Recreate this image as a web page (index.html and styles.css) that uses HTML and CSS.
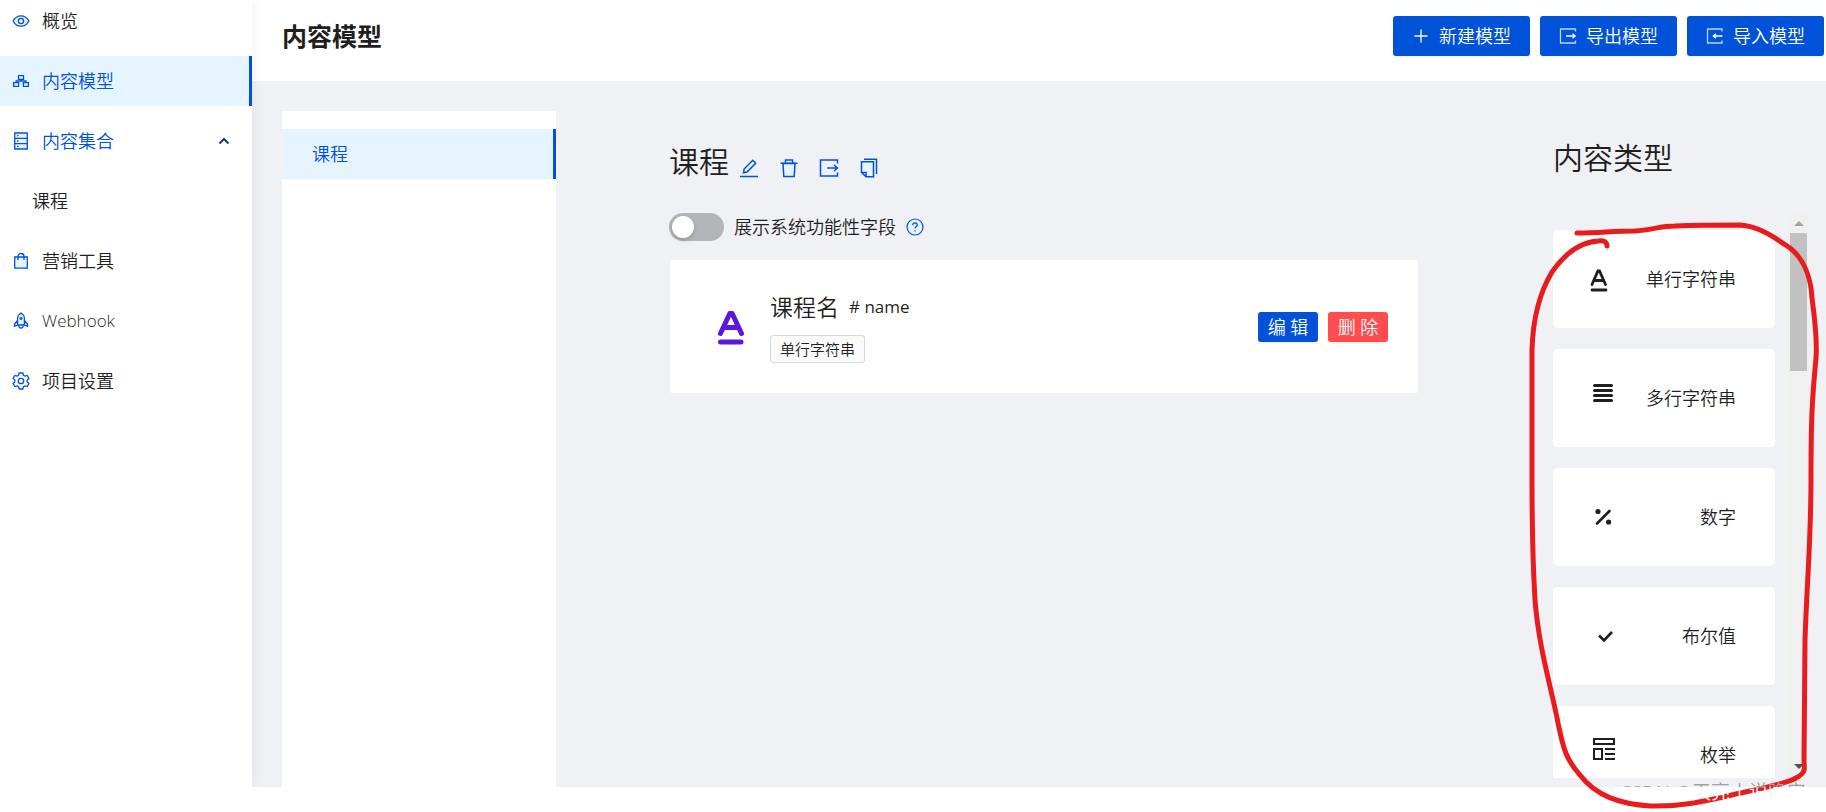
FILE: index.html
```html
<!DOCTYPE html>
<html lang="zh-CN">
<head>
<meta charset="utf-8">
<meta name="viewport" content="width=device-width, initial-scale=1">
<title>内容模型</title>
<link rel="stylesheet" href="styles.css">
</head>
<body>
<div class="app">
  <aside class="sidebar">
    <nav class="menu">
      <a class="menu-item" href="#overview">
        <svg class="icon" viewBox="0 0 18 18"><path fill="#e6f4ff" d="M1 9C3 5.500 5.700 3.800 9 3.800S15 5.500 17 9c-2 3.500-4.700 5.200-8 5.200S3 12.500 1 9z"/><circle cx="9" cy="9" r="2.600"/></svg>
        <span>概览</span>
      </a>
      <a class="menu-item active" href="#models">
        <svg class="icon" viewBox="0 0 18 18"><path d="M6.500 3.600h5v3.800h-5zM1.600 10.700h5v3.600h-5zM11.400 10.700h5v3.600h-5zM9 7.400v1.600M4.100 10.700V9h9.800v1.700"/></svg>
        <span>内容模型</span>
      </a>
      <a class="menu-item open" href="#collections">
        <svg class="icon" viewBox="0 0 18 18"><path fill="#e6f4ff" d="M2.700 1h12.600v16H2.700zM2.700 6.300h12.600M2.700 11.700h12.600"/><path d="M5 3.700h1.500M5 9h1.500M5 14.300h1.500"/></svg>
        <span>内容集合</span>
        <svg class="chevron" viewBox="0 0 12 8"><path d="M1.500 6.500L6 2l4.500 4.500"/></svg>
      </a>
      <a class="menu-item sub" href="#course">课程</a>
      <a class="menu-item" href="#marketing">
        <svg class="icon" viewBox="0 0 18 18"><path fill="#e6f4ff" d="M2.700 5h12.600v11.200H2.700z"/><path d="M6 8V4.500a3 3 0 0 1 6 0V8"/></svg>
        <span>营销工具</span>
      </a>
      <a class="menu-item" href="#webhook">
        <svg class="icon" viewBox="0 0 18 18"><path fill="#e6f4ff" d="M5.600 13V6.500C5.600 4 7 2.200 9 1c2 1.200 3.400 3 3.400 5.500V13zM5.600 8.500L2.500 12v2.200l3.100-1.200M12.400 8.500l3.100 3.500v2.200L12.400 13"/><circle cx="9" cy="6.500" r=".8"/><path d="M6.800 13.500c.1 1.600.9 2.700 2.200 2.700s2.100-1.100 2.200-2.700"/></svg>
        <span class="latin">Webhook</span>
      </a>
      <a class="menu-item" href="#settings">
        <svg class="icon" viewBox="0 0 18 18"><path d="M7.200 1h3.600l.6 2.300 1.400.8 2.300-.7 1.800 3-1.700 1.700v1.800l1.700 1.700-1.800 3-2.300-.7-1.400.8-.6 2.300H7.200l-.6-2.300-1.400-.8-2.300.7-1.800-3 1.700-1.700V8.100L1.100 6.400l1.800-3 2.300.7 1.400-.8z"/><circle cx="9" cy="9" r="2.700"/></svg>
        <span>项目设置</span>
      </a>
    </nav>
  </aside>

  <div class="page">
    <header class="header">
      <h1 class="title">内容模型</h1>
      <div class="actions">
        <button class="btn" type="button">
          <svg class="btn-icon" viewBox="0 0 18 18"><path d="M9 2.500v13M2.500 9h13"/></svg>
          <span>新建模型</span>
        </button>
        <button class="btn" type="button">
          <svg class="btn-icon" viewBox="0 0 18 18"><path opacity=".75" d="M16.500 4.500V2H1.500v14h15v-2.500"/><path d="M7 9h9M13.500 6.800L16.200 9l-2.700 2.200"/></svg>
          <span>导出模型</span>
        </button>
        <button class="btn" type="button">
          <svg class="btn-icon" viewBox="0 0 18 18"><path opacity=".75" d="M16 4.500V2H1.500v14H16v-2.500"/><path d="M16.500 9h-9M10 6.800L7.300 9l2.700 2.200"/></svg>
          <span>导入模型</span>
        </button>
      </div>
    </header>

    <div class="content">
      <nav class="models">
        <a class="model active" href="#course-model">课程</a>
      </nav>

      <main class="schema">
        <div class="schema-head">
          <h2 class="heading">课程</h2>
          <div class="tools">
            <button class="tool" type="button" aria-label="编辑模型"><svg viewBox="0 0 20 20"><path d="M1 18.500h18"/><path fill="#e6f4ff" d="M4.500 14.800l.6-3.800 8.600-8.800 3 3-8.700 8.800z"/></svg></button>
            <button class="tool" type="button" aria-label="删除模型"><svg viewBox="0 0 20 20"><path fill="#e6f4ff" d="M4 5.500h12l-.8 13H4.800z"/><path d="M1.500 5.300h17M6.500 5V2h7v3"/></svg></button>
            <button class="tool" type="button" aria-label="导出模型"><svg viewBox="0 0 20 20"><path d="M18.500 5.500V2H1.500v16h17v-3.500M8 10h10M15 7l3.500 3-3.500 3"/></svg></button>
            <button class="tool" type="button" aria-label="复制模型"><svg viewBox="0 0 20 20"><path d="M5 1.200h12.500V16"/><path fill="#e6f4ff" d="M2.500 3.800h12v15H7l-4.500-4.300zM2.500 14.500H7v4.300"/></svg></button>
          </div>
        </div>

        <div class="toggle-row">
          <input class="switch" type="checkbox" id="system-fields">
          <label for="system-fields">展示系统功能性字段</label>
          <svg class="help" viewBox="0 0 18 18"><circle cx="9" cy="9" r="8"/><path d="M6.700 7.200c0-1.500 1-2.400 2.300-2.400s2.300.9 2.300 2.100c0 1.600-2.300 1.700-2.300 3.600M9 12.200v1.300"/></svg>
        </div>

        <section class="field">
          <svg class="field-icon" viewBox="0 0 28 36"><path d="M3.500 24.500L12.800 4.500h2.400L24.500 24.500M7 18.500h14M3.500 33h20.500"/></svg>
          <div class="field-info">
            <div class="field-name"><h3>课程名</h3><span class="field-key"># name</span></div>
            <span class="tag">单行字符串</span>
          </div>
          <div class="field-actions">
            <button class="btn small" type="button">编 辑</button>
            <button class="btn small danger" type="button">删 除</button>
          </div>
        </section>
      </main>

      <aside class="types">
        <h2 class="heading">内容类型</h2>
        <div class="scroll-area">
          <div class="type-list">
            <button class="type" type="button">
              <svg class="type-icon" viewBox="0 0 32 32"><path stroke-width="2.800" d="M3 21.500L8.900 8h1.600L16.500 21.500M5.800 17.500h8M3 27h14"/></svg>
              <span>单行字符串</span>
            </button>
            <button class="type" type="button">
              <svg class="type-icon" viewBox="0 0 32 32"><path d="M5.500 3.500h17M5.500 8.500h17M5.500 13.500h17M5.500 18.500h17"/></svg>
              <span>多行字符串</span>
            </button>
            <button class="type" type="button">
              <svg class="type-icon" viewBox="0 0 32 32"><path stroke-width="2.600" d="M8 22.500L20.500 10"/><circle class="dot" cx="9" cy="10.500" r="2.600"/><circle class="dot" cx="19.600" cy="21" r="2.600"/></svg>
              <span>数字</span>
            </button>
            <button class="type" type="button">
              <svg class="type-icon" viewBox="0 0 32 32"><path stroke-linecap="butt" stroke-width="2.600" d="M10 15.500l5 5 8-8.500"/></svg>
              <span>布尔值</span>
            </button>
            <button class="type" type="button">
              <svg class="type-icon" viewBox="0 0 32 32"><path stroke-linecap="butt" stroke-width="2" d="M5 0h20v5H5zM5 10h8v10H5zM16 10h10M16 15h10M16 20h10"/></svg>
              <span>枚举</span>
            </button>
          </div>
          <div class="scrollbar">
            <svg class="arrow up" viewBox="0 0 10 5"><path d="M0 5l5-5 5 5z"/></svg>
            <div class="thumb"></div>
            <svg class="arrow down" viewBox="0 0 10 5"><path d="M0 0l5 5 5-5z"/></svg>
          </div>
        </div>
      </aside>
    </div>
  </div>

  <svg class="marker" viewBox="1526 212 300 600"><path d="M1577 233C1600 233 1612 231 1635 231C1652 230 1660 226 1675 226C1700 225 1720 225 1740 225C1760 226 1778 240 1790 248C1804 259 1811 278 1812 298C1815 320 1817 345 1816 358C1812 400 1811 420 1811 480C1811 540 1807 580 1805 640L1804 762C1805 770 1805 773 1796 778C1785 784 1770 786 1755 790C1715 798 1690 807 1650 806C1620 804 1596 796 1580 775C1564 757 1563 745 1558 723C1552 690 1539 650 1535 600C1532 550 1532 520 1532 480L1532 350C1533 315 1540 292 1552 272C1566 252 1582 242 1598 241C1604 240 1607 242 1607 246"/></svg>
  <div class="watermark">CSDN @天亮丨说晚安</div>
</div>
</body>
</html>
```
FILE: styles.css
```css
* {
  box-sizing: border-box;
}

:root {
  --blue: #0052d9;
  --pale: #e6f4ff;
  --ink: #1f1f1f;
  --canvas: #f0f1f5;
}

body {
  margin: 0;
  background: #fff;
  color: var(--ink);
  font-family: "Open Sans", "Noto Sans CJK SC", sans-serif;
  font-size: 18px;
  font-weight: 350;
  line-height: 28px;
}

h1,
h2,
h3 {
  margin: 0;
  font-weight: 350;
}

a {
  color: inherit;
  text-decoration: none;
}

button {
  margin: 0;
  padding: 0;
  border: 0;
  background: none;
  color: inherit;
  font: inherit;
  cursor: pointer;
}

svg {
  display: block;
  flex: none;
  fill: none;
  stroke: currentColor;
}

.app {
  position: relative;
  display: flex;
  height: 100vh;
  padding-bottom: 25px;
  overflow: hidden;
}

/* Side navigation */
.sidebar {
  z-index: 1;
  flex: none;
  width: 252px;
  background: #fff;
  box-shadow: 2px 0 12px rgba(0, 21, 41, 0.06);
  clip-path: inset(0 -20px 0 0);
}

.menu {
  display: flex;
  flex-direction: column;
  gap: 10px;
  margin-top: -4px;
}

.menu-item {
  display: flex;
  align-items: center;
  gap: 12px;
  height: 50px;
  padding: 0 22px 0 12px;
}

.menu-item.sub {
  padding-left: 32px;
}

.menu-item.active {
  border-right: 3px solid var(--blue);
  background: var(--pale);
  color: var(--blue);
}

.menu-item.open {
  color: var(--blue);
}

.latin {
  font-size: 17px;
}

.icon {
  width: 18px;
  height: 18px;
  color: var(--blue);
  stroke-width: 1.3;
}

.chevron {
  width: 12px;
  height: 8px;
  margin-left: auto;
  color: #143c8c;
  stroke-width: 2;
}

/* Page header */
.page {
  display: flex;
  flex: 1;
  flex-direction: column;
  min-width: 0;
}

.header {
  display: flex;
  align-items: center;
  justify-content: space-between;
  padding: 16px 2px 25px 30px;
}

.title {
  font-size: 25px;
  font-weight: 700;
  line-height: 40px;
}

.actions {
  display: flex;
  gap: 10px;
}

.btn {
  display: flex;
  align-items: center;
  justify-content: center;
  gap: 9px;
  height: 40px;
  padding: 0 19px;
  border-radius: 3px;
  background: var(--blue);
  box-shadow: 0 2px 0 rgba(0, 0, 0, 0.04);
  color: #fff;
}

.btn-icon {
  width: 18px;
  height: 18px;
  stroke-width: 1.3;
}

.btn.small {
  width: 60px;
  height: 30px;
  padding: 0;
}

.btn.danger {
  background: #ff4d4f;
}

/* Content */
.content {
  display: flex;
  flex: 1;
  min-height: 0;
  padding: 30px 17px 0 30px;
  background: var(--canvas);
}

.models {
  flex: none;
  width: 274px;
  padding-top: 18px;
  background: #fff;
}

.model {
  display: flex;
  align-items: center;
  height: 50px;
  padding: 0 30px;
  border-right: 3px solid var(--blue);
  background: var(--pale);
  color: var(--blue);
}

.schema {
  flex: 1;
  min-width: 0;
  margin: 27px 134px 0 113px;
}

.heading {
  font-size: 30px;
  line-height: 48px;
}

.schema-head {
  display: flex;
  align-items: flex-end;
  gap: 10px;
}

.tools {
  display: flex;
  gap: 20px;
  padding-bottom: 8px;
}

.tool {
  width: 20px;
  height: 20px;
  color: var(--blue);
}

.tool svg {
  width: 20px;
  height: 20px;
  stroke-width: 1.5;
}

.toggle-row {
  display: flex;
  align-items: center;
  gap: 10px;
  margin: 27px 0 18px;
}

.switch {
  display: flex;
  align-items: center;
  width: 55px;
  height: 28px;
  margin: 0;
  padding: 0 3px;
  border-radius: 14px;
  background: #b4b5b8;
  appearance: none;
  cursor: pointer;
}

.switch::before {
  width: 22px;
  height: 22px;
  border-radius: 50%;
  background: #fff;
  box-shadow: 0 2px 4px rgba(0, 35, 11, 0.2);
  content: "";
}

.switch:checked {
  justify-content: flex-end;
  background: var(--blue);
}

.help {
  width: 18px;
  height: 18px;
  color: var(--blue);
  stroke-width: 1.2;
}

.help circle {
  fill: var(--pale);
}

.field {
  display: flex;
  align-items: center;
  padding: 30px 30px 30px 47px;
  border: 1px solid #eff0f2;
  border-radius: 3px;
  background: #fff;
}

.field-icon {
  width: 28px;
  height: 36px;
  margin-right: 25px;
  color: #5b18dc;
  stroke-linecap: round;
  stroke-linejoin: round;
  stroke-width: 5;
}

.field-info {
  flex: 1;
}

.field-name {
  display: flex;
  align-items: center;
  gap: 10px;
  margin-bottom: 11px;
}

.field-name h3 {
  font-size: 23px;
  line-height: 34px;
}

.field-key {
  font-size: 17px;
  font-weight: 400;
}

.tag {
  display: inline-block;
  padding: 0 9px;
  border: 1px solid #d9d9d9;
  border-radius: 3px;
  background: #fafafa;
  font-size: 15px;
  line-height: 26px;
  vertical-align: top;
}

.field-actions {
  display: flex;
  gap: 10px;
}

/* Field type palette */
.types {
  display: flex;
  flex: none;
  flex-direction: column;
  width: 256px;
  margin: 23px 0 9px;
}

.scroll-area {
  display: flex;
  flex: 1;
  justify-content: space-between;
  min-height: 0;
  margin-top: 30px;
}

.type-list {
  display: flex;
  flex-direction: column;
  gap: 21px;
  width: 222px;
  padding-top: 18px;
  overflow: hidden;
}

.type {
  display: flex;
  flex: none;
  align-items: center;
  justify-content: space-between;
  height: 98px;
  padding: 0 39px 0 36px;
  border-radius: 5px;
  background: #fff;
}

.type-icon {
  width: 32px;
  height: 32px;
  overflow: visible;
  stroke-linecap: round;
  stroke-width: 3;
}

.dot {
  fill: currentColor;
  stroke: none;
}

.scrollbar {
  display: flex;
  flex-direction: column;
  align-items: center;
  width: 21px;
  padding: 9px 0;
  background: #f0f0f0;
}

.thumb {
  width: 17px;
  height: 138px;
  margin: 7px 0 auto;
  background: #c1c1c1;
}

.arrow {
  width: 10px;
  height: 5px;
  fill: #505050;
  stroke: none;
}

.arrow.up {
  fill: #a3a3a3;
}

/* Overlays */
.marker {
  position: absolute;
  z-index: 2;
  top: 212px;
  right: 0;
  width: 300px;
  height: 600px;
  color: #e81c1c;
  stroke-linecap: round;
  stroke-width: 5;
  pointer-events: none;
}

.watermark {
  position: absolute;
  z-index: 3;
  right: 20px;
  bottom: 6px;
  background: linear-gradient(#a0a0a4 9px, #fff 9px);
  background-clip: text;
  color: transparent;
  font-size: 19px;
  font-weight: 400;
  line-height: 28px;
}
```
